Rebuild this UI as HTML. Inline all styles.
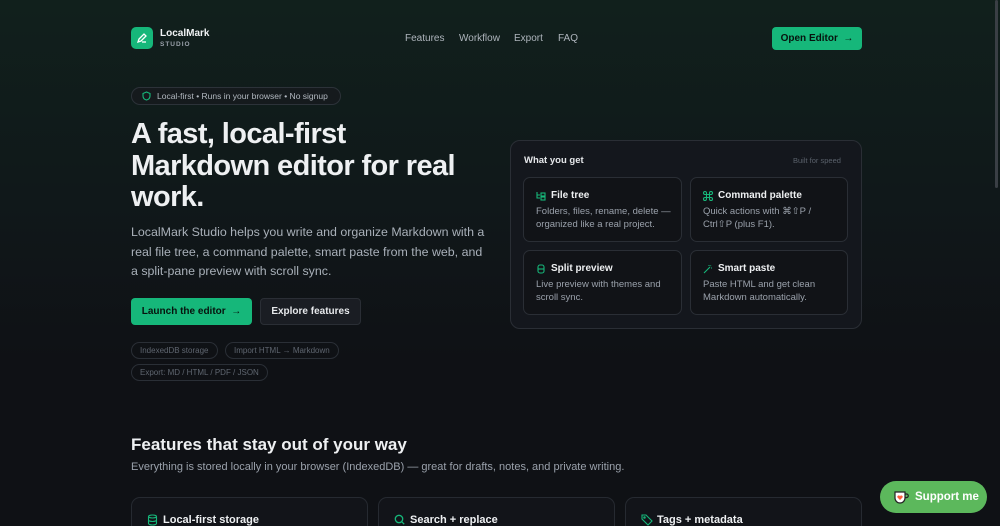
<!DOCTYPE html>
<html><head><meta charset="utf-8"><style>
*{box-sizing:border-box;margin:0;padding:0}
html{width:1000px;height:526px;overflow:hidden;background:#0f1115}
body{width:1000px;height:526px;overflow:hidden;font-family:"Liberation Sans",sans-serif;color:#e6e8eb;background:linear-gradient(180deg,#11201c 0px,#10181a 200px,#0f1115 360px,#0f1115 100%);position:relative}
.abs{position:absolute}
.logo{left:131px;top:27px;width:22px;height:22px;border-radius:5px;background:#16b77a;display:flex;align-items:center;justify-content:center}
.nav a{position:absolute;top:33px;font-size:10px;color:#aeb4bc}
.btn{display:flex;align-items:center;justify-content:center;font-size:10px;font-weight:bold;border-radius:4px}
.pill{border:1px solid #2a2f36;border-radius:10px;font-size:8px;color:#5f6670;height:17px;display:flex;align-items:center;padding:0 8px;position:absolute}
.card{position:absolute;border:1px solid #2a2e35;border-radius:7px;background:#111317}
.card h4{position:absolute;left:27px;top:12px;font-size:10px;color:#eef0f2}
.card p{position:absolute;left:12px;top:27px;font-size:9.5px;line-height:13px;color:#9aa1ab}
.card svg{position:absolute;left:12px;top:13px}
.fc{position:absolute;top:497px;width:237px;height:29px;border:1px solid #262a31;border-bottom:none;border-radius:9px 9px 0 0;background:#121419}
.fc span{position:absolute;left:31px;top:16px;font-size:11px;font-weight:bold;color:#eef0f2}
.fc svg{position:absolute;left:15px;top:16px}
</style></head><body>
<div class="abs logo"><svg width="12" height="12" viewBox="0 0 12 12" fill="none" stroke="#fff" stroke-width="1.3"><path d="M2 10l1-3 5-5 2 2-5 5z"/><path d="M6 10h4"/></svg></div>
<div class="abs" style="left:160px;top:28px;font-size:10px;font-weight:bold;color:#f1f3f5">LocalMark</div>
<div class="abs" style="left:160px;top:41px;font-size:6.5px;font-weight:bold;letter-spacing:1px;color:#9aa1ab">STUDIO</div>
<div class="nav"><a style="left:405px">Features</a><a style="left:459px">Workflow</a><a style="left:514px">Export</a><a style="left:558px">FAQ</a></div>
<div class="abs btn" style="left:772px;top:27px;width:90px;height:23px;background:#16b77a;color:#07130e">Open Editor &nbsp;→</div>
<div class="abs" style="left:131px;top:87px;width:210px;height:18px;border:1px solid #2c3239;border-radius:9px;background:#151a1d;font-size:8.5px;color:#b2b8c0;display:flex;align-items:center;padding-left:10px"><svg width="9" height="10" viewBox="0 0 9 10" fill="none" stroke="#16b77a" stroke-width="1.1"><path d="M4.5 1L1 2.5v2.5c0 2 1.5 3.5 3.5 4 2-.5 3.5-2 3.5-4V2.5z"/></svg><span style="margin-left:6px">Local-first • Runs in your browser • No signup</span></div>
<div class="abs" style="left:131px;top:119px;font-size:29px;line-height:31.5px;font-weight:bold;letter-spacing:-0.6px;color:#eef0f2;width:380px">A fast, local-first<br>Markdown editor for real<br>work.</div>
<div class="abs" style="left:131px;top:223px;font-size:12.4px;line-height:19.5px;color:#a9b0b9;width:360px">LocalMark Studio helps you write and organize Markdown with a real file tree, a command palette, smart paste from the web, and a split-pane preview with scroll sync.</div>
<div class="abs btn" style="left:131px;top:298px;width:121px;height:27px;background:#16b77a;color:#07130e">Launch the editor &nbsp;→</div>
<div class="abs btn" style="left:260px;top:298px;width:101px;height:27px;background:#1a1d23;border:1px solid #2a2e35;color:#e6e8eb">Explore features</div>
<div class="pill" style="left:131px;top:342px">IndexedDB storage</div>
<div class="pill" style="left:225px;top:342px">Import HTML → Markdown</div>
<div class="pill" style="left:131px;top:364px">Export: MD / HTML / PDF / JSON</div>

<div class="abs" style="left:510px;top:140px;width:352px;height:189px;border:1px solid #2a2e35;border-radius:10px;background:#14171d"></div>
<div class="abs" style="left:524px;top:155px;font-size:9.5px;font-weight:bold;color:#e6e8eb">What you get</div>
<div class="abs" style="left:793px;top:156px;font-size:7.5px;color:#5a616b">Built for speed</div>
<div class="card" style="left:523px;top:177px;width:159px;height:65px"><svg width="10" height="10" viewBox="0 0 10 10" fill="none" stroke="#16b77a" stroke-width="1.1"><path d="M1 1v6h3M1 4h3"/><rect x="5" y="2" width="4" height="3"/><rect x="5" y="6" width="4" height="3"/></svg><h4>File tree</h4><p>Folders, files, rename, delete —<br>organized like a real project.</p></div>
<div class="card" style="left:690px;top:177px;width:158px;height:65px"><svg width="10" height="10" viewBox="0 0 10 10" fill="none" stroke="#16b77a" stroke-width="1.1"><path d="M3.5 3.5h3v3h-3zM3.5 3.5H2a1.5 1.5 0 1 1 1.5-1.5zM6.5 3.5V2A1.5 1.5 0 1 1 8 3.5zM6.5 6.5H8A1.5 1.5 0 1 1 6.5 8zM3.5 6.5V8A1.5 1.5 0 1 1 2 6.5z"/></svg><h4>Command palette</h4><p>Quick actions with ⌘⇧P /<br>Ctrl⇧P (plus F1).</p></div>
<div class="card" style="left:523px;top:250px;width:159px;height:65px"><svg width="10" height="10" viewBox="0 0 10 10" fill="none" stroke="#16b77a" stroke-width="1.1"><rect x="2" y="1" width="6" height="8" rx="2"/><path d="M2 5h6"/></svg><h4>Split preview</h4><p>Live preview with themes and<br>scroll sync.</p></div>
<div class="card" style="left:690px;top:250px;width:158px;height:65px"><svg width="10" height="10" viewBox="0 0 10 10" fill="none" stroke="#16b77a" stroke-width="1.1"><path d="M1 9l6-6M6 1v1M9 4H8M8 1.5l-.5.5M4 1h0M9 6h0"/></svg><h4>Smart paste</h4><p>Paste HTML and get clean<br>Markdown automatically.</p></div>

<div class="abs" style="left:131px;top:435px;font-size:17px;font-weight:bold;color:#eef0f2">Features that stay out of your way</div>
<div class="abs" style="left:131px;top:461px;font-size:11px;color:#9aa1ab">Everything is stored locally in your browser (IndexedDB) — great for drafts, notes, and private writing.</div>
<div class="fc" style="left:131px"><svg width="11" height="12" viewBox="0 0 11 12" fill="none" stroke="#16b77a" stroke-width="1.1"><ellipse cx="5.5" cy="2.5" rx="4" ry="1.5"/><path d="M1.5 2.5v7c0 .8 1.8 1.5 4 1.5s4-.7 4-1.5v-7M1.5 6c0 .8 1.8 1.5 4 1.5s4-.7 4-1.5"/></svg><span>Local-first storage</span></div>
<div class="fc" style="left:378px"><svg width="11" height="12" viewBox="0 0 11 12" fill="none" stroke="#16b77a" stroke-width="1.3"><circle cx="5" cy="5" r="3.7"/><path d="M7.7 7.7l2.5 2.5"/></svg><span>Search + replace</span></div>
<div class="fc" style="left:625px"><svg width="12" height="12" viewBox="0 0 12 12" fill="none" stroke="#16b77a" stroke-width="1.1"><path d="M1 5V1h4l6 6-4 4z"/><circle cx="3.5" cy="3.5" r=".7"/></svg><span>Tags + metadata</span></div>

<div class="abs" style="left:880px;top:481px;width:107px;height:32px;border-radius:16px;background:#5cb85c;display:flex;align-items:center;padding-left:13px;font-size:11.5px;font-weight:bold;color:#fff"><svg width="16" height="15" viewBox="0 0 16 15"><path d="M2 2h10v6a5 5 0 0 1-10 0z" fill="#fff" stroke="#222" stroke-width="1.2"/><path d="M12 4h1.5a1.8 1.8 0 0 1 0 3.6H12" fill="none" stroke="#222" stroke-width="1.2"/><path d="M7 10l-2.5-2.5a1.3 1.3 0 0 1 2.5-1.3 1.3 1.3 0 0 1 2.5 1.3z" fill="#ff5e3a"/></svg><span style="margin-left:6px">Support me</span></div>
<div class="abs" style="left:995px;top:0;width:3px;height:188px;background:#3a3f45;border-radius:2px"></div>
</body></html>
